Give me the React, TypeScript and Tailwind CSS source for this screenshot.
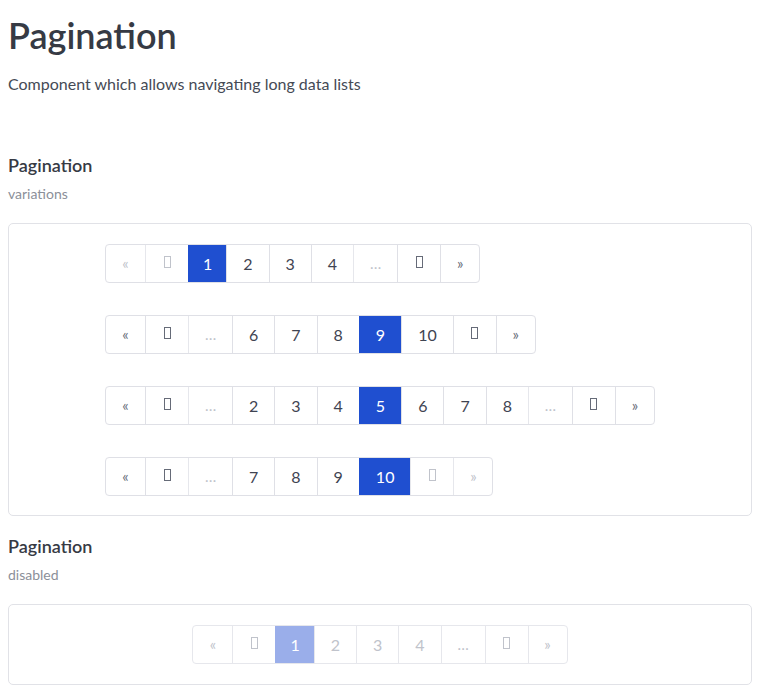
import React from 'react'

type Item = {
  kind: 'first' | 'prev' | 'next' | 'last' | 'page' | 'dots'
  label?: string
  active?: boolean
  disabled?: boolean
}

const pages = (nums: number[], active: number): Item[] =>
  nums.map((n) => ({ kind: 'page', label: String(n), active: n === active }))

const rows: Item[][] = [
  [
    { kind: 'first', disabled: true },
    { kind: 'prev', disabled: true },
    ...pages([1, 2, 3, 4], 1),
    { kind: 'dots' },
    { kind: 'next' },
    { kind: 'last' },
  ],
  [
    { kind: 'first' },
    { kind: 'prev' },
    { kind: 'dots' },
    ...pages([6, 7, 8, 9, 10], 9),
    { kind: 'next' },
    { kind: 'last' },
  ],
  [
    { kind: 'first' },
    { kind: 'prev' },
    { kind: 'dots' },
    ...pages([2, 3, 4, 5, 6, 7, 8], 5),
    { kind: 'dots' },
    { kind: 'next' },
    { kind: 'last' },
  ],
  [
    { kind: 'first' },
    { kind: 'prev' },
    { kind: 'dots' },
    ...pages([7, 8, 9, 10], 10),
    { kind: 'next', disabled: true },
    { kind: 'last', disabled: true },
  ],
]

const disabledRow: Item[] = [
  { kind: 'first' },
  { kind: 'prev' },
  ...pages([1, 2, 3, 4], 1),
  { kind: 'dots' },
  { kind: 'next' },
  { kind: 'last' },
]

// missing icon-font glyph, drawn as the empty box the browser shows
function Tofu() {
  return (
    <span className="inline-flex w-[10px] justify-center">
      <span className="block w-[7px] h-[12px] border border-current -mt-[3px]" />
    </span>
  )
}

function Cell({ item, off, first }: { item: Item; off: boolean; first: boolean }) {
  const muted = off || item.disabled || item.kind === 'dots'
  let body: React.ReactNode = item.label
  if (item.kind === 'first') body = '«'
  if (item.kind === 'last') body = '»'
  if (item.kind === 'dots') body = '…'
  if (item.kind === 'prev' || item.kind === 'next') body = <Tofu />

  const arrow = item.kind === 'first' || item.kind === 'last'
  const icon = arrow || item.kind === 'prev' || item.kind === 'next'

  let size = 'text-[16px] px-4'
  if (arrow) size = 'text-[15px] w-[39px]'
  else if (item.kind === 'dots') size = 'text-[15px] w-[44px]'
  else if (item.label === '1') size = 'text-[16px] px-[14px]'

  return (
    <div
      className={[
        'h-full flex items-center justify-center',
        first ? '' : 'border-l',
        item.active
          ? off
            ? 'bg-[#9aaeea] text-white border-[#9aaeea]'
            : 'bg-[#1f4fd0] text-white border-[#1f4fd0]'
          : muted
          ? 'text-[#c0c3cb] border-[#e6e7ec]'
          : icon
          ? 'text-[#666b78] border-[#dfe0e6]'
          : 'text-[#3f4452] border-[#dfe0e6]',
        size,
      ].join(' ')}
    >
      {body}
    </div>
  )
}

function Pager({ items, off = false }: { items: Item[]; off?: boolean }) {
  return (
    <div
      className={[
        'inline-flex h-[39px] rounded-[4px] border overflow-hidden bg-white',
        off ? 'border-[#e6e7ec]' : 'border-[#dfe0e6]',
      ].join(' ')}
    >
      {items.map((it, i) => (
        <Cell key={i} item={it} off={off} first={i === 0} />
      ))}
    </div>
  )
}

export default function App() {
  return (
    <div className="px-2 pt-[10px] pb-2 font-['Lato',sans-serif] text-[#363a44] bg-white">
      <h1 className="text-[36px] leading-[50px] font-semibold">Pagination</h1>
      <p className="mt-[14px] text-[16px] leading-[20px] text-[#454a55]">
        Component which allows navigating long data lists
      </p>

      <h2 className="mt-[59px] text-[18px] leading-[24px] font-semibold">Pagination</h2>
      <p className="mt-[8px] text-[14px] leading-[18px] text-[#8b8f99]">variations</p>
      <div className="mt-[20px] border border-[#e1e2e7] rounded-[5px] pt-[20px] pb-[19px] flex justify-center">
        <div className="flex flex-col items-start gap-[32px]">
          {rows.map((r, i) => (
            <Pager key={i} items={r} />
          ))}
        </div>
      </div>

      <h2 className="mt-[18px] text-[18px] leading-[24px] font-semibold">Pagination</h2>
      <p className="mt-[8px] text-[14px] leading-[18px] text-[#8b8f99]">disabled</p>
      <div className="mt-[20px] border border-[#e1e2e7] rounded-[5px] py-[20px] flex justify-center">
        <Pager items={disabledRow} off />
      </div>
    </div>
  )
}
